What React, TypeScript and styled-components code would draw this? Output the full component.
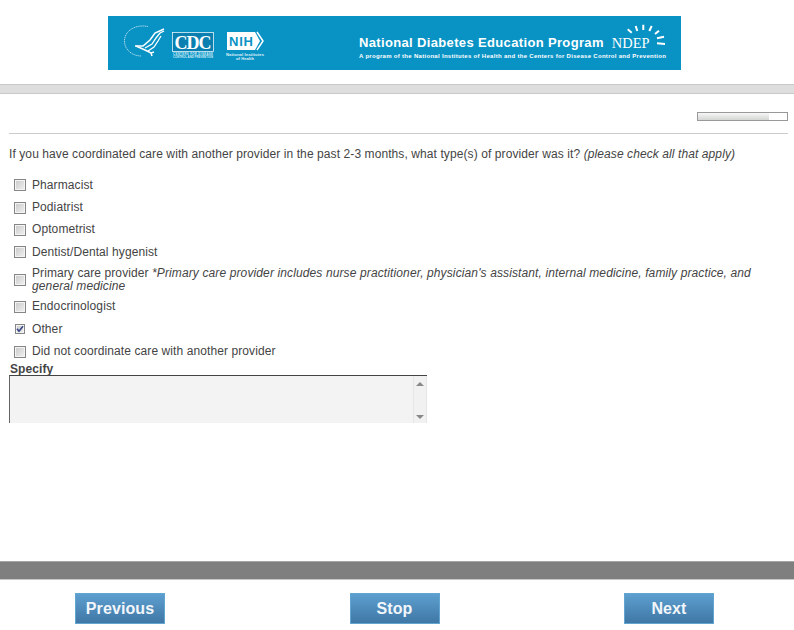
import { ReactElement } from 'react'
import styled, { createGlobalStyle } from 'styled-components'

const GlobalStyle = createGlobalStyle`
  html, body {
    margin: 0;
    padding: 0;
    background: #fff;
  }
  body {
    font-family: 'Liberation Sans', Arial, sans-serif;
    font-size: 12px;
    letter-spacing: 0.09px;
    color: #444;
  }
`

const S = {
  Page: styled.div`
    width: 794px;
    height: 630px;
    overflow: hidden;
    display: flex;
    flex-direction: column;
  `,
  Header: styled.header`
    display: flex;
    padding: 16px 0 14px 108px;
  `,
  Banner: styled.div`
    width: 573px;
    height: 54px;
    background: #0993c5;
    color: #fff;
    display: flex;
    align-items: center;
    box-sizing: border-box;
    padding-left: 16px;
  `,
  Logos: styled.div`
    display: grid;
    grid-template-columns: 48px 54px 133px;
    align-items: center;
    height: 36px;
  `,
  BannerCopy: styled.div`
    display: flex;
    flex-direction: column;
    gap: 2px;
    padding-top: 10px;
  `,
  BannerTitleRow: styled.div`
    display: flex;
    align-items: center;
    gap: 8px;
  `,
  BannerTitle: styled.div`
    font-size: 13px;
    font-weight: bold;
    letter-spacing: 0.35px;
    line-height: 14px;
    white-space: nowrap;
  `,
  NdepMark: styled.div`
    position: relative;
    font-family: 'Liberation Serif', serif;
    font-size: 14.4px;
    letter-spacing: 0;
    line-height: 14px;
  `,
  Rays: styled.svg`
    position: absolute;
    left: 10px;
    top: -14px;
  `,
  BannerSub: styled.div`
    font-size: 6px;
    font-weight: bold;
    line-height: 8px;
    letter-spacing: 0.3px;
    white-space: nowrap;
  `,
  Band: styled.div`
    height: 8px;
    background: #dedede;
    border-top: 1px solid #c9c9c9;
    border-bottom: 1px solid #c9c9c9;
  `,
  Main: styled.main`
    flex: 1;
    padding: 18px 6px 0 9px;
    min-height: 0;
  `,
  ProgressRow: styled.div`
    display: flex;
    justify-content: flex-end;
    padding-bottom: 12px;
    border-bottom: 1px solid #ccc;
  `,
  Progress: styled.div`
    width: 89px;
    height: 7px;
    border: 1px solid #999;
    background: #fff;
  `,
  ProgressFill: styled.div`
    height: 100%;
    background: linear-gradient(#f6f7f6, #d4d6d4);
  `,
  Question: styled.p`
    margin: 13px 0 13px;
    line-height: 14px;
    white-space: nowrap;
  `,
  Options: styled.div`
    display: flex;
    flex-direction: column;
  `,
  Option: styled.label`
    display: flex;
    align-items: center;
    gap: 6px;
    padding: 3px 0 3px 5px;
    box-sizing: border-box;
    min-height: 22.4px;
    line-height: 13px;
  `,
  Box: styled.span<{ $checked?: boolean }>`
    flex: none;
    box-sizing: border-box;
    width: ${({ $checked }) => ($checked ? '10px' : '12px')};
    height: ${({ $checked }) => ($checked ? '10px' : '12px')};
    margin: ${({ $checked }) => ($checked ? '0 1px' : '0')};
    border: 1px solid #858686;
    background: linear-gradient(135deg, #c8c8c8, #f2f2f2);
    box-shadow: inset 0 0 0 1px #f4f4f4;
    display: flex;
    align-items: center;
    justify-content: center;
  `,
  Note: styled.em`
    font-style: italic;
  `,
  OptionNote: styled.em`
    font-style: italic;
    letter-spacing: 0.12px;
  `,
  SpecifyLabel: styled.div`
    font-weight: bold;
    line-height: 12px;
    margin: 0 0 0 1px;
    height: 12px;
  `,
  TextareaClip: styled.div`
    width: 418px;
    height: 48px;
    box-sizing: border-box;
    background: #f3f3f3;
    border-top: 1px solid #444;
    border-left: 1px solid #666;
    display: flex;
    justify-content: flex-end;
  `,
  Scrollbar: styled.div`
    width: 14px;
    box-sizing: border-box;
    border-left: 1px solid #e6e6e6;
    border-right: 1px solid #e6e6e6;
    display: flex;
    flex-direction: column;
    justify-content: space-between;
    align-items: center;
    padding: 6px 0 4px;
    background: #f1f1f1;
  `,
  Arrow: styled.span<{ $down?: boolean }>`
    width: 0;
    height: 0;
    border-left: 4px solid transparent;
    border-right: 4px solid transparent;
    ${({ $down }) =>
      $down ? 'border-top: 4px solid #888;' : 'border-bottom: 4px solid #888;'}
  `,
  FooterBand: styled.div`
    height: 17px;
    background: #7f7f7f;
    border-top: 1px solid #a6a6a6;
    border-bottom: 1px solid #c8c8c8;
  `,
  Footer: styled.footer`
    display: grid;
    grid-template-columns: repeat(3, 90px);
    justify-content: space-between;
    padding: 13px 80px 6px 75px;
  `,
  NavButton: styled.button`
    height: 31px;
    padding: 1px 0 0;
    border: 1px solid #62a5d1;
    background: linear-gradient(#5d9fcf, #3f77a6);
    color: #f2f6fa;
    font-family: 'Liberation Sans', Arial, sans-serif;
    font-size: 16px;
    font-weight: bold;
    letter-spacing: 0.1px;
  `,
}

const options: { label: string; note?: string; checked?: boolean }[] = [
  { label: 'Pharmacist' },
  { label: 'Podiatrist' },
  { label: 'Optometrist' },
  { label: 'Dentist/Dental hygenist' },
  {
    label: 'Primary care provider ',
    note: "*Primary care provider includes nurse practitioner, physician's assistant, internal medicine, family practice, and general medicine",
  },
  { label: 'Endocrinologist' },
  { label: 'Other', checked: true },
  { label: 'Did not coordinate care with another provider' },
]

const HhsLogo = () => (
  <svg width="42" height="36" viewBox="0 0 42 36" fill="none" stroke="#fff">
    <path
      d="M24 1.500C11 -1 0.500 6 0.500 16c0 9 8 15 17 15"
      stroke="#bfe2f0"
      strokeWidth="0.9"
      strokeDasharray="1.400 0.700"
    />
    <path d="M11 21l8 0 7-6 5-7 9-4" strokeWidth="1.500" />
    <path d="M21 23l7-4 4-6 4-5 4-2" strokeWidth="1.300" />
    <path d="M24 26l6-4 4-6 3-5" strokeWidth="1.300" />
    <path d="M12 21l9 4 6 3 3-1M27 28l1 3" strokeWidth="1.500" />
  </svg>
)

const CdcLogo = () => (
  <svg width="43" height="36" viewBox="0 0 43 36">
    <rect x="0.500" y="7.500" width="41" height="19" fill="#0a7fb0" stroke="#e4f3f9" strokeWidth="0.8" />
    <text
      x="21"
      y="23.500"
      textAnchor="middle"
      textLength="37"
      fontFamily="'Liberation Serif', serif"
      fontWeight="bold"
      fontSize="18"
      fill="#fff"
    >
      CDC
    </text>
    <text x="21" y="29.800" textAnchor="middle" textLength="40" fontSize="2.800" fill="#d5edf6" fontWeight="bold">
      CENTERS FOR DISEASE
    </text>
    <text x="21" y="32.800" textAnchor="middle" textLength="40" fontSize="2.800" fill="#d5edf6" fontWeight="bold">
      CONTROL AND PREVENTION
    </text>
  </svg>
)

const NihLogo = () => (
  <svg width="42" height="36" viewBox="0 0 42 36">
    <path d="M1 7h28l5 9-5 9H1z" fill="#fff" />
    <path d="M31 7l6 9-6 9" fill="none" stroke="#fff" strokeWidth="1.500" />
    <text
      x="15"
      y="21"
      textAnchor="middle"
      textLength="24"
      fontFamily="'Liberation Sans', sans-serif"
      fontWeight="bold"
      fontSize="13"
      fill="#0993c5"
    >
      NIH
    </text>
    <text x="19" y="30.500" textAnchor="middle" fontSize="4" fontWeight="bold" fill="#e4f3f9" textLength="38">
      National Institutes
    </text>
    <text x="19" y="35" textAnchor="middle" fontSize="4" fontWeight="bold" fill="#e4f3f9">
      of Health
    </text>
  </svg>
)

const CheckMark = () => (
  <svg width="8" height="8" viewBox="0 0 8 8">
    <path d="M1 3.800l2 2.400 4-5" fill="none" stroke="#3b4a8c" strokeWidth="1.700" />
  </svg>
)

export default function App(): ReactElement {
  return (
    <S.Page>
      <GlobalStyle />
      <S.Header>
        <S.Banner>
          <S.Logos>
            <HhsLogo />
            <CdcLogo />
            <NihLogo />
          </S.Logos>
          <S.BannerCopy>
            <S.BannerTitleRow>
              <S.BannerTitle>National Diabetes Education Program</S.BannerTitle>
              <S.NdepMark>
                NDEP
                <S.Rays width="46" height="28" viewBox="0 0 46 28" stroke="#fff" strokeWidth="2">
                  <path d="M5.700 7.300l4 3.400M13.700 4l1.600 5M21.300 2.700V8M29.700 4l-2.400 5M37 8.700L33 12M42 14.700l-7 1.600M43 22l-8-.7" />
                </S.Rays>
              </S.NdepMark>
            </S.BannerTitleRow>
            <S.BannerSub>
              A program of the National Institutes of Health and the Centers for Disease Control and Prevention
            </S.BannerSub>
          </S.BannerCopy>
        </S.Banner>
      </S.Header>
      <S.Band />
      <S.Main>
        <S.ProgressRow>
          <S.Progress>
            <S.ProgressFill style={{ width: '80%' }} />
          </S.Progress>
        </S.ProgressRow>
        <S.Question>
          If you have coordinated care with another provider in the past 2-3 months, what type(s) of provider was it?{' '}
          <S.Note>(please check all that apply)</S.Note>
        </S.Question>
        <S.Options>
          {options.map(({ label, note, checked }) => (
            <S.Option key={label}>
              <S.Box $checked={checked}>{checked && <CheckMark />}</S.Box>
              <span>
                {label}
                {note && <S.OptionNote>{note}</S.OptionNote>}
              </span>
            </S.Option>
          ))}
        </S.Options>
        <S.SpecifyLabel>Specify</S.SpecifyLabel>
        <S.TextareaClip>
          <S.Scrollbar>
            <S.Arrow />
            <S.Arrow $down />
          </S.Scrollbar>
        </S.TextareaClip>
      </S.Main>
      <S.FooterBand />
      <S.Footer>
        <S.NavButton>Previous</S.NavButton>
        <S.NavButton>Stop</S.NavButton>
        <S.NavButton>Next</S.NavButton>
      </S.Footer>
    </S.Page>
  )
}
